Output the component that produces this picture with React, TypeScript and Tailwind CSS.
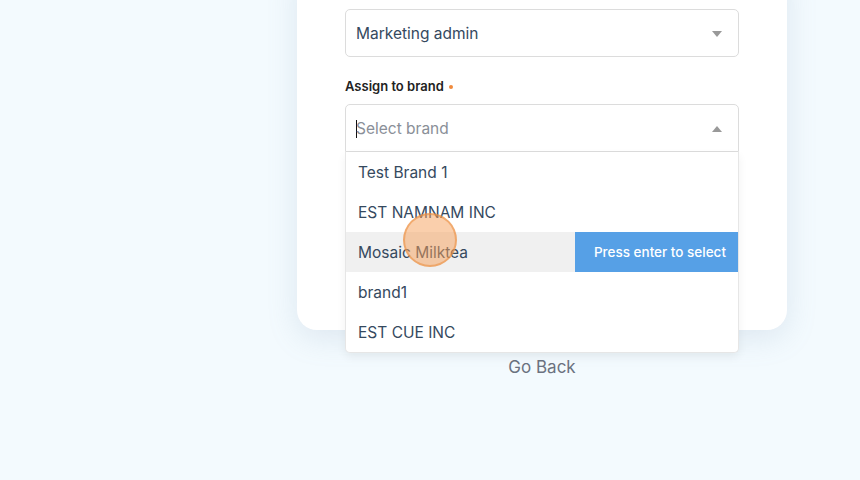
import React from "react";

const items = ["Test Brand 1", "EST NAMNAM INC", "Mosaic Milktea", "brand1", "EST CUE INC"];

function Caret({ up }: { up?: boolean }) {
  return (
    <svg width="10" height="6" viewBox="0 0 10 6" className="shrink-0">
      {up ? <path d="M0 6 L5 0 L10 6 Z" fill="#999" /> : <path d="M0 0 L10 0 L5 6 Z" fill="#999" />}
    </svg>
  );
}

export default function App() {
  return (
    <div
      className="relative w-[860px] h-[480px] overflow-hidden bg-[#f3fafe]"
      style={{ fontFamily: "Inter, 'Noto Sans', sans-serif" }}
    >
      <div className="pl-[297px] flex flex-col w-[787px]">
        <div className="mt-[-40px] w-[490px] h-[370px] bg-white rounded-[20px] shadow-[0_8px_30px_rgba(120,150,180,0.18)] px-[48px] pt-[49px]">
          <div className="h-[48px] border border-[#dcdcdc] rounded-[5px] flex items-center pl-[10px] pr-[16px] pt-[1px] justify-between">
            <span className="text-[15.5px] text-[#35495e]">Marketing admin</span>
            <Caret />
          </div>
          <div className="mt-[20px] h-[18px] flex items-center text-[13px] font-semibold text-[#222] pt-[1px]">
            Assign to brand
            <span className="ml-[5px] w-[4px] h-[4px] rounded-full bg-[#f08a3c]" />
          </div>
          <div className="relative mt-[9px]">
            <div className="h-[48px] border border-[#dcdcdc] rounded-t-[5px] flex items-center pl-[10px] pr-[16px] pt-[1px] justify-between">
              <span className="flex items-center text-[15.5px] text-[#8a8f98]">
                <span className="w-[1px] h-[18px] bg-[#111] mr-[-1px]" />
                Select brand
              </span>
              <Caret up />
            </div>
            <div className="absolute left-0 right-0 top-[48px] bg-white border border-t-0 border-[#e6e6e6] rounded-b-[5px] shadow-[0_4px_10px_rgba(0,0,0,0.06)] z-10">
              {items.map((it, i) => (
                <div
                  key={it}
                  className={
                    "h-[40px] flex items-center justify-between text-[15.5px] text-[#35495e] " +
                    (i === 2 ? "bg-[#f0f0f0]" : "")
                  }
                >
                  <span className="pl-[12px] pt-[1px]">{it}</span>
                  {i === 2 && (
                    <span className="h-[40px] w-[163px] bg-[#56a0e6] text-white text-[13.5px] font-medium flex items-center justify-end pr-[12px]">
                      Press enter to select
                    </span>
                  )}
                </div>
              ))}
            </div>
          </div>
        </div>
        <div className="w-[490px] text-center mt-[25px] text-[17px] text-[#6b7280]">Go Back</div>
      </div>
      <div className="absolute left-[403px] top-[213px] w-[54px] h-[54px] rounded-full bg-[rgba(246,160,90,0.5)] border-2 border-[rgba(235,140,60,0.55)] z-20" />
    </div>
  );
}
